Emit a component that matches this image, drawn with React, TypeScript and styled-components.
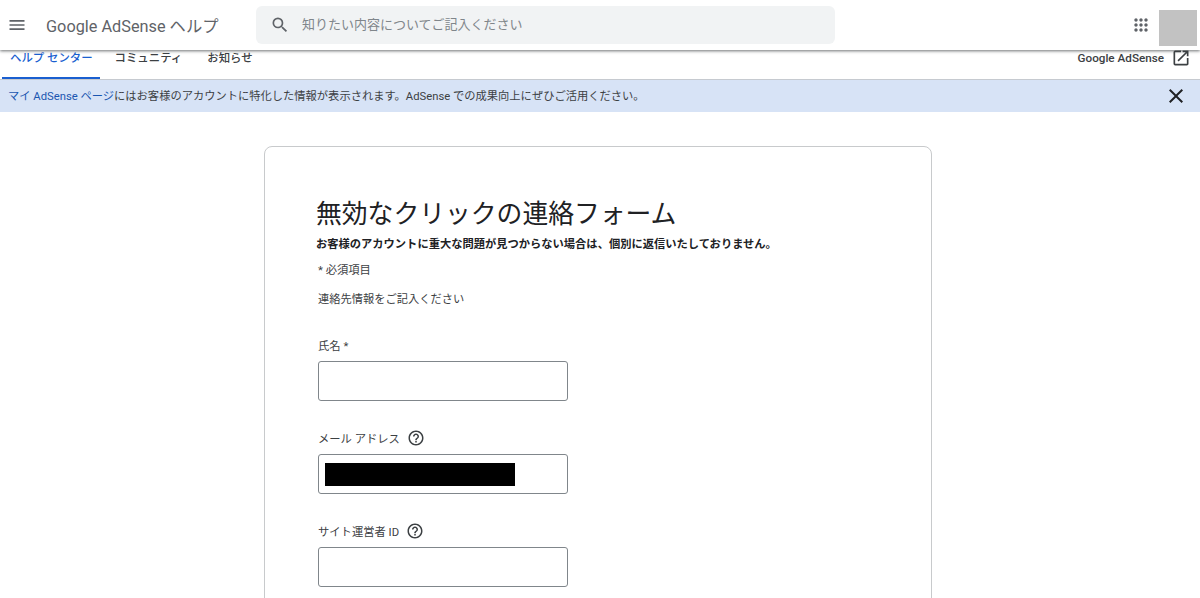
import { createGlobalStyle } from 'styled-components'
import styled from 'styled-components'

const GlobalStyle = createGlobalStyle`
    html, body {
        margin: 0;
        height: 598px;
        overflow: hidden;
        background: #ffffff;
    }
    * {
        box-sizing: border-box;
    }
    body {
        font-family: Roboto, 'Noto Sans CJK JP', sans-serif;
        color: #3c4043;
    }
`

const MenuIcon = () => (
    <svg width="20" height="20" viewBox="0 0 24 24" fill="#5f6368">
        <path d="M3 18h18v-2H3v2zm0-5h18v-2H3v2zm0-7v2h18V6H3z" />
    </svg>
)

const SearchIcon = () => (
    <svg width="20" height="20" viewBox="0 0 24 24" fill="#5f6368">
        <path d="M15.5 14h-.79l-.28-.27A6.471 6.471 0 0 0 16 9.5 6.5 6.5 0 1 0 9.5 16c1.61 0 3.09-.59 4.23-1.57l.27.28v.79l5 4.99L20.49 19l-4.99-5zm-6 0C7.01 14 5 11.99 5 9.5S7.01 5 9.5 5 14 7.01 14 9.5 11.99 14 9.5 14z" />
    </svg>
)

const AppsIcon = () => (
    <svg width="20" height="20" viewBox="0 0 24 24" fill="#5f6368">
        <path d="M6 8c1.1 0 2-.9 2-2s-.9-2-2-2-2 .9-2 2 .9 2 2 2zm6 12c1.1 0 2-.9 2-2s-.9-2-2-2-2 .9-2 2 .9 2 2 2zm-6 0c1.1 0 2-.9 2-2s-.9-2-2-2-2 .9-2 2 .9 2 2 2zm0-6c1.1 0 2-.9 2-2s-.9-2-2-2-2 .9-2 2 .9 2 2 2zm6 0c1.1 0 2-.9 2-2s-.9-2-2-2-2 .9-2 2 .9 2 2 2zm4-8c0 1.1.9 2 2 2s2-.9 2-2-.9-2-2-2-2 .9-2 2zm-4 2c1.1 0 2-.9 2-2s-.9-2-2-2-2 .9-2 2 .9 2 2 2zm6 6c1.1 0 2-.9 2-2s-.9-2-2-2-2 .9-2 2 .9 2 2 2zm0 6c1.1 0 2-.9 2-2s-.9-2-2-2-2 .9-2 2 .9 2 2 2z" />
    </svg>
)

const OpenIcon = () => (
    <svg width="20" height="20" viewBox="0 0 24 24" fill="#3c4043">
        <path d="M19 19H5V5h7V3H5a2 2 0 0 0-2 2v14a2 2 0 0 0 2 2h14c1.1 0 2-.9 2-2v-7h-2v7zM14 3v2h3.59l-9.83 9.83 1.41 1.41L19 6.41V10h2V3h-7z" />
    </svg>
)

const CloseIcon = () => (
    <svg width="24" height="24" viewBox="0 0 24 24" fill="#202124">
        <path d="M19 6.41 17.59 5 12 10.59 6.41 5 5 6.41 10.59 12 5 17.59 6.41 19 12 13.41 17.59 19 19 17.59 13.41 12z" />
    </svg>
)

const HelpIcon = () => (
    <svg width="18" height="18" viewBox="0 0 24 24" fill="#3c4043">
        <path d="M11 18h2v-2h-2v2zm1-16C6.48 2 2 6.48 2 12s4.48 10 10 10 10-4.48 10-10S17.52 2 12 2zm0 18c-4.41 0-8-3.59-8-8s3.59-8 8-8 8 3.59 8 8-3.59 8-8 8zm0-14c-2.21 0-4 1.79-4 4h2c0-1.1.9-2 2-2s2 .9 2 2c0 2-3 1.75-3 5h2c0-2.25 3-2.5 3-5 0-2.21-1.79-4-4-4z" />
    </svg>
)

const fields = [
    { label: '氏名 *', hasHelp: false, redacted: false },
    { label: 'メール アドレス', hasHelp: true, redacted: true },
    { label: 'サイト運営者 ID', hasHelp: true, redacted: false },
]

export default function App() {
    return (
        <>
            <GlobalStyle />
            <Header>
                <MenuButton>
                    <MenuIcon />
                </MenuButton>
                <ProductName>Google AdSense ヘルプ</ProductName>
                <SearchBar>
                    <SearchIcon />
                    <SearchPlaceholder>知りたい内容についてご記入ください</SearchPlaceholder>
                </SearchBar>
                <HeaderRight>
                    <AppsIcon />
                    <Avatar />
                </HeaderRight>
            </Header>
            <Nav>
                <Tabs>
                    <Tab active>ヘルプ センター</Tab>
                    <Tab>コミュニティ</Tab>
                    <Tab>お知らせ</Tab>
                </Tabs>
                <ExternalLink>
                    Google AdSense
                    <OpenIcon />
                </ExternalLink>
            </Nav>
            <Banner>
                <BannerText>
                    <BannerLink>マイ AdSense ページ</BannerLink>
                    にはお客様のアカウントに特化した情報が表示されます。AdSense での成果向上にぜひご活用ください。
                </BannerText>
                <CloseIcon />
            </Banner>
            <Main>
                <Card>
                    <Title>無効なクリックの連絡フォーム</Title>
                    <Notice>お客様のアカウントに重大な問題が見つからない場合は、個別に返信いたしておりません。</Notice>
                    <SmallText>* 必須項目</SmallText>
                    <SectionText>連絡先情報をご記入ください</SectionText>
                    {fields.map((field) => (
                        <Field key={field.label}>
                            <FieldLabel>
                                {field.label}
                                {field.hasHelp && <HelpIcon />}
                            </FieldLabel>
                            <InputBox>{field.redacted && <Redaction />}</InputBox>
                        </Field>
                    ))}
                </Card>
            </Main>
        </>
    )
}

const Header = styled.header`
    position: relative;
    z-index: 2;
    display: flex;
    align-items: center;
    height: 50px;
    padding: 0 3px 0 7px;
    background: #ffffff;
    box-shadow: 0 1px 3px rgba(60, 64, 67, 0.75);
`

const MenuButton = styled.div`
    display: flex;
    width: 20px;
    margin-right: 19px;
`

const ProductName = styled.div`
    width: 210px;
    font-size: 16.3px;
    color: #5f6368;
    white-space: nowrap;
`

const SearchBar = styled.div`
    display: flex;
    align-items: center;
    gap: 12px;
    width: 579px;
    height: 38px;
    margin-top: -1px;
    padding-left: 14px;
    background: #f1f3f4;
    border-radius: 6px;
`

const SearchPlaceholder = styled.span`
    margin-top: -2px;
    font-size: 13px;
    color: #80868b;
`

const HeaderRight = styled.div`
    display: flex;
    align-items: center;
    gap: 8px;
    margin-left: auto;
`

const Avatar = styled.div`
    width: 38px;
    height: 36px;
    margin-top: 6px;
    background: #c2c2c2;
`

const Nav = styled.nav`
    display: flex;
    justify-content: space-between;
    height: 30px;
    padding: 0 9px 0 2px;
    background: #ffffff;
    border-bottom: 1px solid #c6cad0;
`

const Tabs = styled.div`
    display: flex;
`

const Tab = styled.div<{ active?: boolean }>`
    display: flex;
    align-items: center;
    height: 29px;
    padding: 0 ${({ active }) => (active ? '7px 0 8px' : '10px')};
    margin-left: ${({ active }) => (active ? '0' : '5px')};
    padding-bottom: 14px;
    font-size: 11.4px;
    font-weight: 500;
    color: ${({ active }) => (active ? '#1a5fd0' : '#3c4043')};
    border-bottom: 2px solid ${({ active }) => (active ? '#1a5fd0' : 'transparent')};
    white-space: nowrap;
`

const ExternalLink = styled.div`
    display: flex;
    align-items: center;
    gap: 7px;
    padding-bottom: 14px;
    font-size: 11.7px;
    font-weight: 500;
    color: #3c4043;
`

const Banner = styled.div`
    display: flex;
    align-items: center;
    justify-content: space-between;
    height: 32px;
    padding: 0 12px 0 8px;
    background: #d7e3f6;
`

const BannerText = styled.div`
    margin-top: -3px;
    font-size: 11.27px;
    color: #3c4043;
`

const BannerLink = styled.span`
    color: #1a56b0;
`

const Main = styled.main`
    display: flex;
    justify-content: center;
    padding: 34px 4px 0 0;
`

const Card = styled.section`
    width: 668px;
    height: 480px;
    padding: 47px 52px 0 51px;
    background: #ffffff;
    border: 1px solid #c8cacc;
    border-radius: 8px;
`

const Title = styled.h1`
    margin: 0;
    font-size: 25.8px;
    line-height: 40px;
    font-weight: 400;
    color: #202124;
`

const Notice = styled.p`
    margin: 3px 0 0;
    font-size: 11.27px;
    line-height: 16px;
    font-weight: 700;
    color: #202124;
`

const SmallText = styled.p`
    margin: 10px 0 0 2px;
    font-size: 11.3px;
    line-height: 16px;
    color: #3c4043;
`

const SectionText = styled.p`
    margin: 13px 0 0 2px;
    font-size: 11.25px;
    line-height: 16px;
    color: #3c4043;
`

const Field = styled.div`
    margin: 27px 0 0 2px;
    height: 66px;
`

const FieldLabel = styled.div`
    display: flex;
    align-items: center;
    gap: 7px;
    height: 19px;
    padding-top: 1px;
    margin-bottom: 7px;
    font-size: 11.3px;
    color: #3c4043;
`

const InputBox = styled.div`
    display: flex;
    align-items: center;
    width: 250px;
    height: 40px;
    padding-left: 6px;
    border: 1px solid #80868b;
    border-radius: 3px;
`

const Redaction = styled.div`
    width: 190px;
    height: 23px;
    background: #000000;
`
